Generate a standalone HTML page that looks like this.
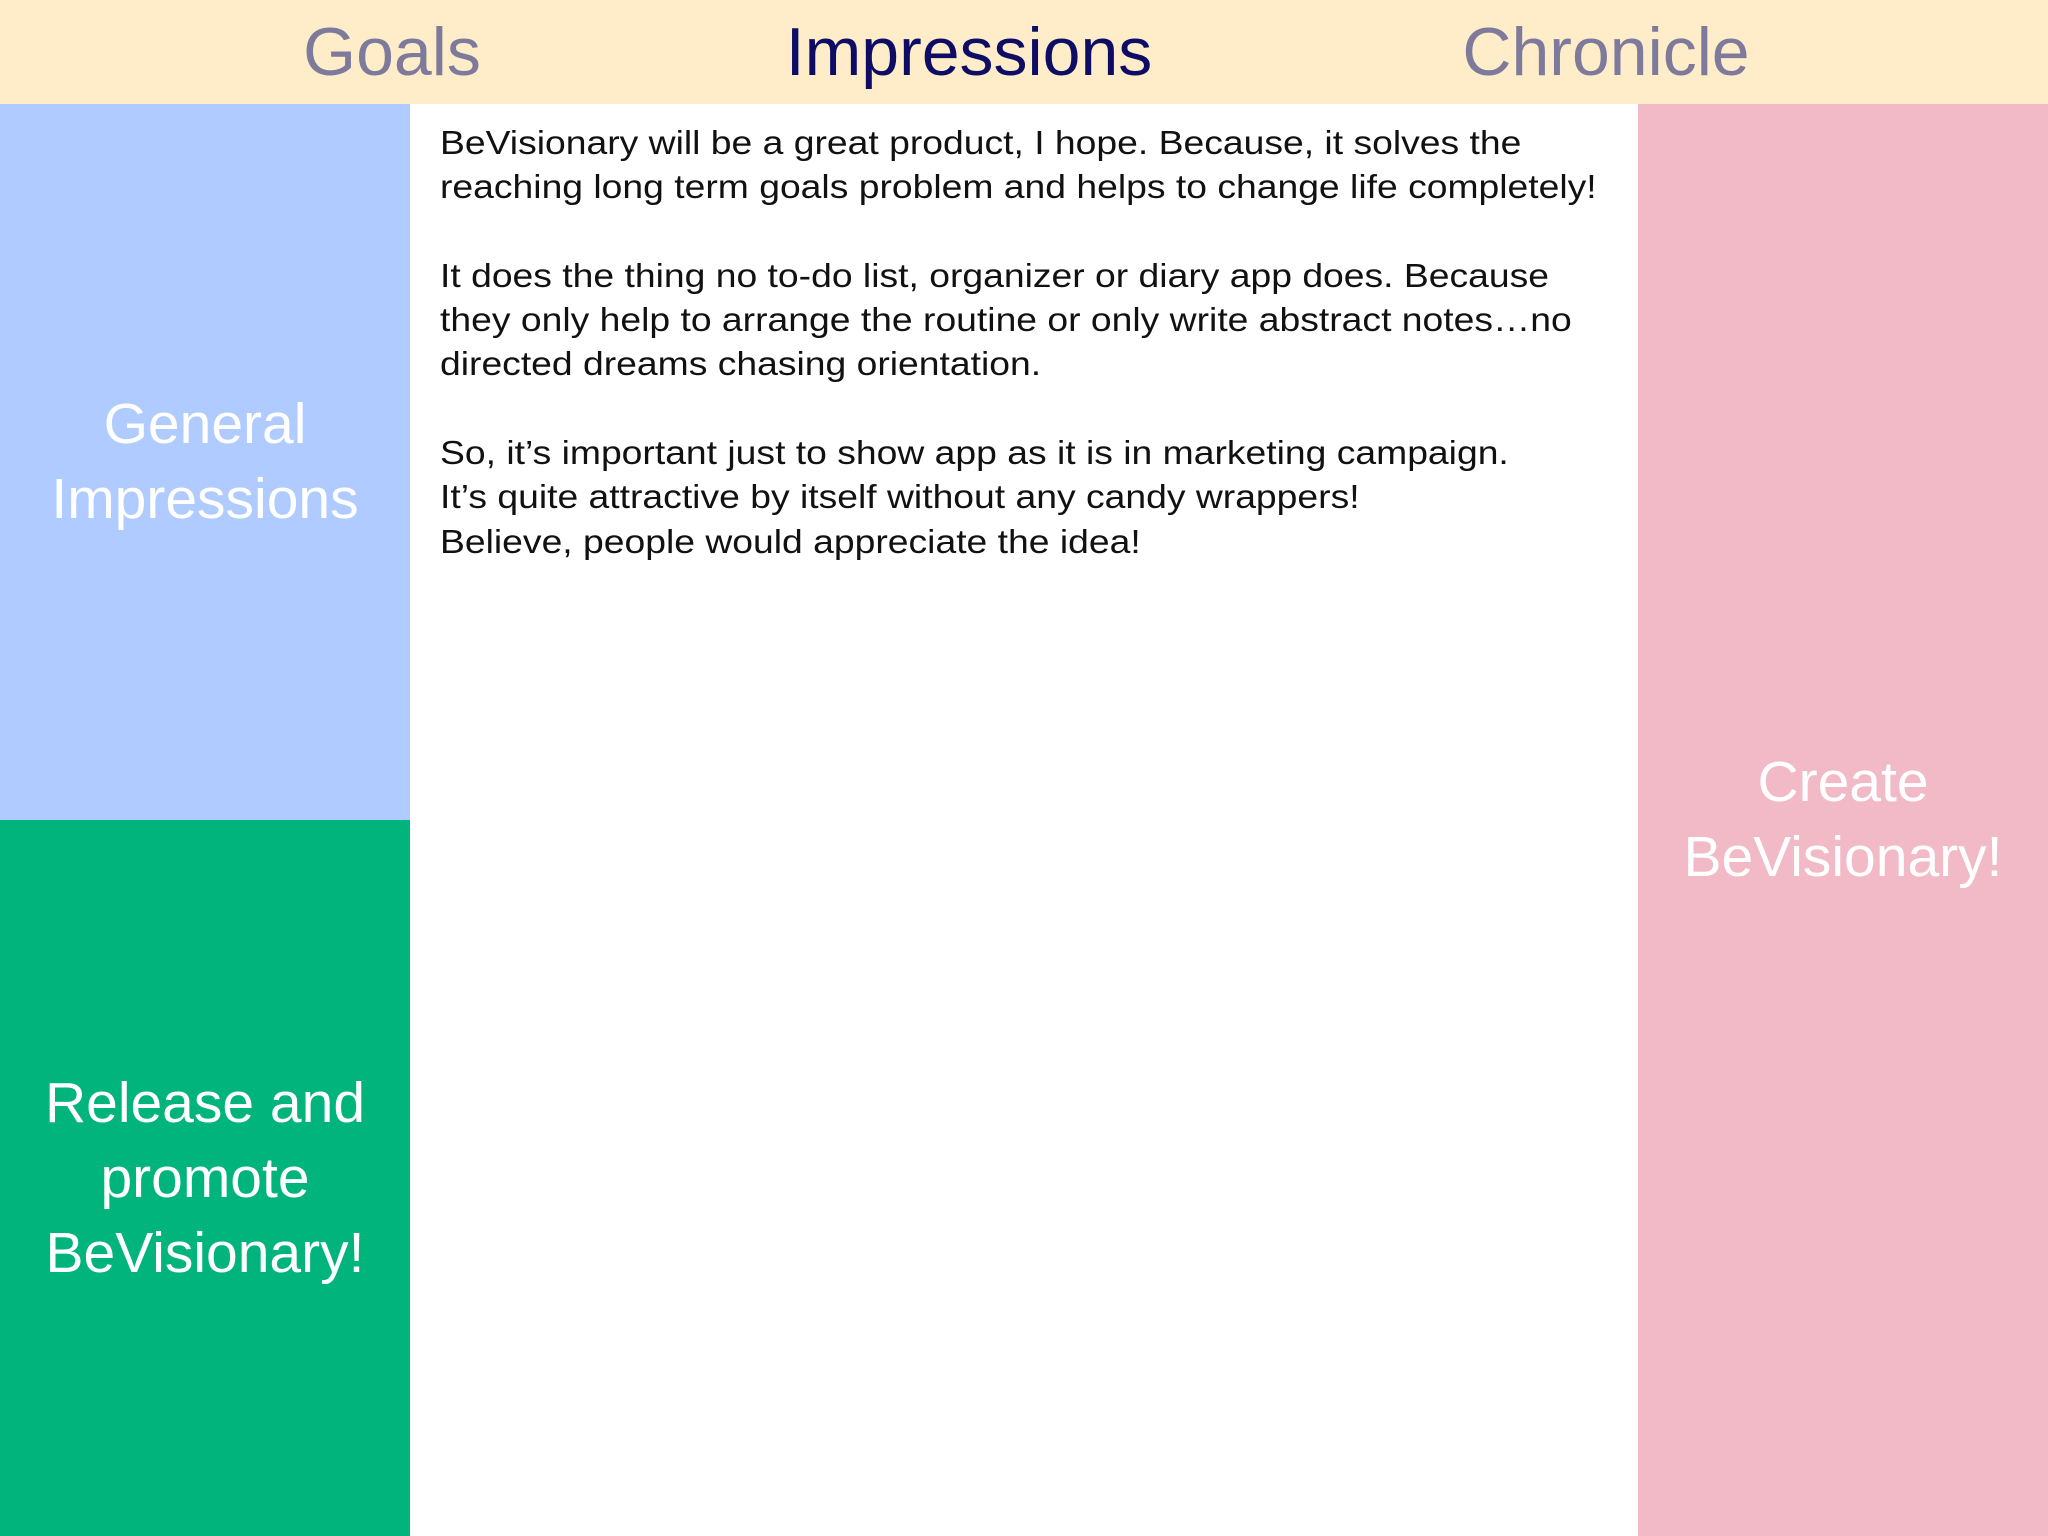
<!DOCTYPE html>
<html><head><meta charset="utf-8"><style>
body{margin:0;width:2048px;height:1536px;overflow:hidden;font-family:"Liberation Sans",sans-serif;background:#fff;position:relative}
.hdr{position:absolute;left:0;top:0;width:2048px;height:104px;background:#ffecc9}
.hdr div{position:absolute;top:0;height:104px;line-height:104px;font-size:68px;transform:translateX(-50%);white-space:nowrap}
.side{position:absolute;display:flex;align-items:center;justify-content:center;text-align:center;color:#fff;font-size:57px;line-height:75px}
.txt{position:absolute;left:440px;top:121px;font-size:33px;line-height:44.3px;color:#111;white-space:nowrap;transform:scaleX(1.13);transform-origin:0 0}
</style></head><body>
<div class="hdr">
<div style="left:392px;color:#7d7a9c">Goals</div>
<div style="left:969px;color:#0d0d66">Impressions</div>
<div style="left:1606px;color:#7d7a9c">Chronicle</div>
</div>
<div class="side" style="left:0;top:104px;width:410px;height:716px;background:#b0cbff">General<br>Impressions</div>
<div class="side" style="left:0;top:820px;width:410px;height:716px;background:#00b47b">Release and<br>promote<br>BeVisionary!</div>
<div class="side" style="left:1638px;top:104px;width:410px;height:1432px;background:#f1bac6">Create<br>BeVisionary!</div>
<div class="txt">BeVisionary will be a great product, I hope. Because, it solves the<br>reaching long term goals problem and helps to change life completely!<br><br>It does the thing no to-do list, organizer or diary app does. Because<br>they only help to arrange the routine or only write abstract notes…no<br>directed dreams chasing orientation.<br><br>So, it’s important just to show app as it is in marketing campaign.<br>It’s quite attractive by itself without any candy wrappers!<br>Believe, people would appreciate the idea!</div>
</body></html>
